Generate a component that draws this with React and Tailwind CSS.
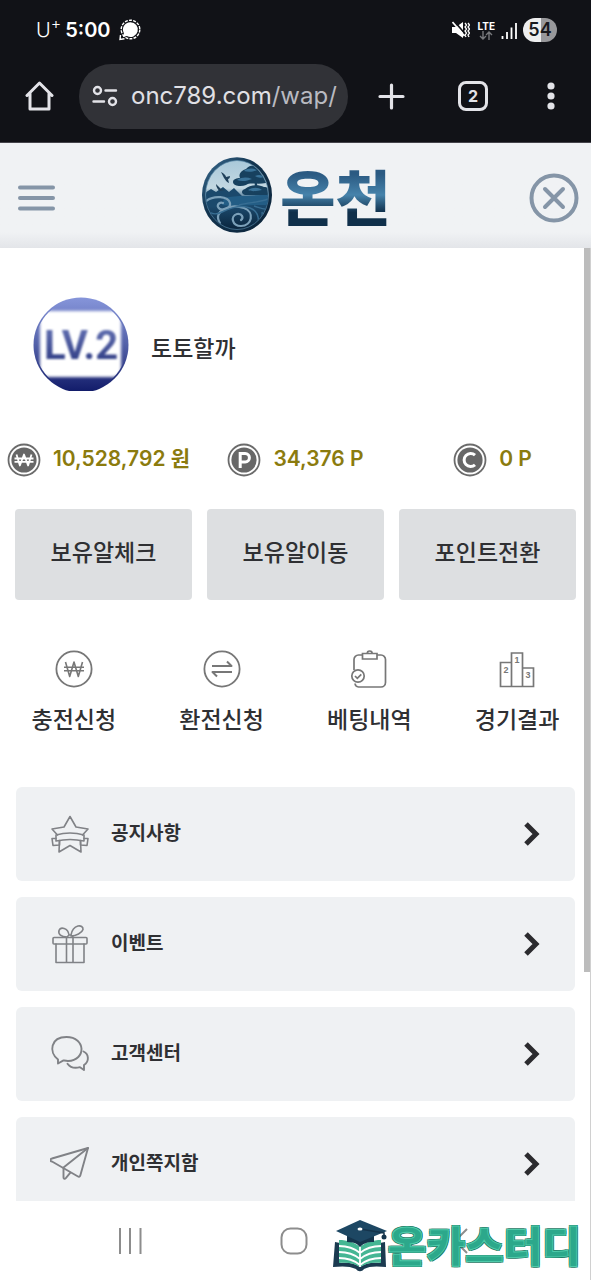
import React from "react";

const WonBadge = () => (
  <svg width="34" height="34" viewBox="0 0 34 34" aria-hidden="true">
    <circle cx="17" cy="17" r="15.5" fill="none" stroke="#6b6b6b" strokeWidth="1.8" />
    <circle cx="17" cy="17" r="12.6" fill="#676767" />
    <path d="M9.5 11.5l3.4 11 4.1-11 4.1 11 3.4-11M7.5 15.5h19M7.5 18.8h19" fill="none" stroke="#fff" strokeWidth="1.8" strokeLinejoin="round" />
  </svg>
);

const PointBadge = () => (
  <svg width="34" height="34" viewBox="0 0 34 34" aria-hidden="true">
    <circle cx="17" cy="17" r="15.5" fill="none" stroke="#6b6b6b" strokeWidth="1.8" />
    <circle cx="17" cy="17" r="12.6" fill="#676767" />
    <path d="M13.2 25V10.6h5a4.2 4.2 0 0 1 0 8.4h-5" fill="none" stroke="#fff" strokeWidth="3" />
  </svg>
);

const CouponBadge = () => (
  <svg width="34" height="34" viewBox="0 0 34 34" aria-hidden="true">
    <circle cx="17" cy="17" r="15.5" fill="none" stroke="#6b6b6b" strokeWidth="1.8" />
    <circle cx="17" cy="17" r="12.6" fill="#676767" />
    <path d="M22 12.2a6.5 6.5 0 1 0 0 9.6" fill="none" stroke="#fff" strokeWidth="3" />
  </svg>
);

const DepositIcon = () => (
  <svg width="38" height="38" viewBox="0 0 38 38" fill="none" stroke="#777" strokeWidth="1.8" aria-hidden="true">
    <circle cx="19" cy="19" r="17.6" />
    <path d="M10.5 12l4.2 14.500L19 12l4.300 14.500L27.500 12M9 17.300h20M9 20.800h20" strokeWidth="1.6" strokeLinejoin="round" />
  </svg>
);

const WithdrawIcon = () => (
  <svg width="38" height="38" viewBox="0 0 38 38" fill="none" stroke="#777" strokeWidth="1.8" aria-hidden="true">
    <circle cx="19" cy="19" r="17.6" />
    <path d="M9 16h19.5l-4.5-4.5M29 22H9.5l4.5 4.5" strokeWidth="2" strokeLinejoin="round" />
  </svg>
);

const BetIcon = () => (
  <svg width="38" height="40" viewBox="0 0 38 40" fill="none" stroke="#777" strokeWidth="1.7" aria-hidden="true">
    <path d="M12.5 6H8.5A4.5 4.5 0 0 0 4 10.5V21M5 34.5A4 4 0 0 0 8.5 38H31a4.5 4.5 0 0 0 4.5-4.5v-23A4.5 4.5 0 0 0 31 6h-4" />
    <path d="M12.5 4.5H27V10H12.5zM17.2 4.5a2.5 2.5 0 0 1 5 0" />
    <circle cx="8" cy="27" r="6.2" />
    <path d="M5 27l2.3 2.3 4-4" />
  </svg>
);

const ResultIcon = () => (
  <svg width="36" height="38" viewBox="0 0 36 38" aria-hidden="true">
    <path d="M1.5 12.5h11v24h-11zM12.5 3h11v33.5h-11zM23.5 18h11v18.5h-11z" fill="none" stroke="#777" strokeWidth="1.7" />
    <g fill="#777" fontFamily="Liberation Sans, sans-serif" fontSize="9" fontWeight="700" textAnchor="middle">
      <text x="7" y="23">2</text>
      <text x="18" y="13">1</text>
      <text x="29" y="28">3</text>
    </g>
  </svg>
);

const iconProps = {
  width: 40,
  height: 40,
  viewBox: "0 0 40 40",
  fill: "none",
  stroke: "#808286",
  strokeWidth: 1.6,
  strokeLinejoin: "round",
  strokeLinecap: "round",
  "aria-hidden": true,
};

const NoticeIcon = () => (
  <svg {...iconProps}>
    <path d="M7.5 21L2 15l12-2L20 2.500 26 13l12 2-5.500 6" />
    <path d="M6 21c9-2.500 19-2.500 28 0v6c-9-2-19-2-28 0z" />
    <path d="M6 24.500H2l1 7 6.500-.5v-4M34 24.500h4l-1 7-6.500-.5v-4" />
    <path d="M9.500 26.500L9 38l11-6.500L31 38l-.5-11.500" />
  </svg>
);

const EventIcon = () => (
  <svg {...iconProps}>
    <rect x="3" y="13.5" width="34" height="6.5" rx="1" />
    <path d="M6 20v18.500h28V20M16.500 13.500v25M23 13.500v25" />
    <path d="M17 13c-6 0-9-3-8-6.500C10.500 2.500 18 3.500 19 11M21 12c5 0 11-3 12-6.500C33.500 0 23 0 21 11M17 13l2-2h2l2 2" />
  </svg>
);

const SupportIcon = () => (
  <svg {...iconProps} strokeWidth="1.9">
    <path d="M8 25.500C-1.500 18 .5 3 16.500 3 36 3 36.500 26.500 18 27c-2 0-3-.3-4.500-.6L8 29.500z" />
    <path d="M33.500 17.500c5.500 2.500 6 10 .5 13.500v5l-4-2.800c-5 1.300-10 0-12.500-3.500" />
  </svg>
);

const MessageIcon = () => (
  <svg {...iconProps} strokeWidth="1.9">
    <path d="M38 4L2 14.500a1.500 1.500 0 0 0 0 3L28 32.500a1.600 1.600 0 0 0 2.300-1z" />
    <path d="M38 4L13.500 23.500v10c0 1.500 1.500 1.500 2.300.6l4.400-5.300" />
  </svg>
);

const balances = [
  { icon: WonBadge, text: "10,528,792 원" },
  { icon: PointBadge, text: "34,376 P" },
  { icon: CouponBadge, text: "0 P" },
];

const actions = ["보유알체크", "보유알이동", "포인트전환"];

const shortcuts = [
  { icon: DepositIcon, label: "충전신청" },
  { icon: WithdrawIcon, label: "환전신청" },
  { icon: BetIcon, label: "베팅내역" },
  { icon: ResultIcon, label: "경기결과" },
];

const menus = [
  { icon: NoticeIcon, label: "공지사항" },
  { icon: EventIcon, label: "이벤트" },
  { icon: SupportIcon, label: "고객센터" },
  { icon: MessageIcon, label: "개인쪽지함" },
];

const StatusBar = () => (
  <div className="flex h-15 items-center justify-between pl-9 pr-[34px] text-white">
    <div className="flex items-center">
      <span className="text-xl font-light">U<sup className="text-base">+</sup></span>
      <span className="ml-1 text-xl font-semibold">5:00</span>
      <svg className="ml-2" width="22" height="22" viewBox="0 0 22 22" aria-hidden="true">
        <circle cx="11.5" cy="10.5" r="9.3" fill="none" stroke="#fff" strokeWidth="1.4" strokeDasharray="3 1.2" />
        <path d="M11.5 3.2a7.4 7.4 0 1 1-3.6 13.900L4 18l.9-3.800A7.400 7.400 0 0 1 11.500 3.200z" fill="#fff" />
        <path d="M1.5 16L1 20.500l4.500-.8" fill="none" stroke="#fff" strokeWidth="1.4" />
      </svg>
    </div>

    <div className="flex items-center">
      <svg width="18" height="18" viewBox="0 0 18 18" aria-hidden="true">
        <path d="M0 6h4l7-5v16l-7-5H0z" fill="#fff" />
        <path d="M2 0l12 14" stroke="#111217" strokeWidth="1.8" />
        <path d="M.5 1l12 14" stroke="#fff" strokeWidth="1.7" />
        <path d="M13 2l1.500 2L13 6l1.500 2L13 10l1.500 2L13 14l1 2M16 2l1.500 2L16 6l1.500 2L16 10l1.500 2-1.500 2 1 2" fill="none" stroke="#fff" strokeWidth="1.3" />
      </svg>
      <div className="ml-2 flex flex-col items-center">
        <span className="text-[10px] font-bold leading-[10px]">LTE</span>
        <svg width="14" height="9" viewBox="0 0 14 9" fill="none" stroke="#77787c" strokeWidth="1.4" aria-hidden="true">
          <path d="M4 0v8M1 5l3 3 3-3M10 9V1M7 4l3-3 3 3" />
        </svg>
      </div>
      <svg className="ml-1.5" width="16" height="17" viewBox="0 0 16 17" stroke="#fff" strokeWidth="1.8" aria-hidden="true">
        <path d="M1.5 14v3M6 10v7M10.500 5.500V17M15 1v16" />
      </svg>
      <span className="ml-1.5 flex h-6 w-[34px] items-center justify-center rounded-full bg-linear-to-r from-[#eeeeef] from-53% to-[#98989b] to-53% text-lg font-semibold text-[#18191d]">
        54
      </span>
    </div>
  </div>
);

const BrowserBar = () => (
  <div className="flex h-18 items-center pl-[25px] pr-9">
    <button type="button" aria-label="Home">
      <svg width="29" height="32" viewBox="0 0 29 32" fill="none" stroke="#e3e3e8" strokeWidth="3" strokeLinejoin="round" strokeLinecap="round" aria-hidden="true">
        <path d="M2 15.5L14.500 3 27 15.500M5 13v16h19V13" />
      </svg>
    </button>
    <div className="ml-[25px] flex h-[65px] min-w-0 flex-1 items-center rounded-full bg-[#313237] pl-3 pr-2">
      <svg className="shrink-0" width="28" height="22" viewBox="0 0 28 22" fill="none" stroke="#e3e3e8" strokeWidth="2.4" strokeLinecap="round" aria-hidden="true">
        <circle cx="6.5" cy="5.5" r="3.5" />
        <path d="M14.5 5.5H25M2.500 16.500H13" />
        <circle cx="21.5" cy="16.5" r="3.5" />
      </svg>
      <span className="ml-3 min-w-0 flex-1 overflow-hidden whitespace-nowrap text-2xl text-[#e0e0e5]">
        onc789.com<span className="text-[#b9bac1]">/wap/</span>
      </span>
    </div>
    <button type="button" aria-label="New tab" className="ml-[30px]">
      <svg width="27" height="27" viewBox="0 0 27 27" stroke="#e3e3e8" strokeWidth="3.2" strokeLinecap="round" aria-hidden="true">
        <path d="M13.500 2v23M2 13.500h23" />
      </svg>
    </button>
    <button type="button" aria-label="Tabs" className="ml-[53px] flex size-[30px] items-center justify-center rounded-lg border-3 border-[#e3e3e8] text-base font-bold text-[#e3e3e8]">
      2
    </button>
    <button type="button" aria-label="More" className="ml-[59px]">
      <svg width="8" height="28" viewBox="0 0 8 28" fill="#e3e3e8" aria-hidden="true">
        <circle cx="4" cy="4" r="3.6" />
        <circle cx="4" cy="14" r="3.6" />
        <circle cx="4" cy="24" r="3.6" />
      </svg>
    </button>
  </div>
);

const Emblem = () => (
  <svg width="70" height="76" viewBox="0 0 70 76" aria-hidden="true">
    <defs>
      <linearGradient id="rim" x1="0" y1="0" x2="1" y2="1">
        <stop offset="0" stopColor="#3d6f94" />
        <stop offset=".4" stopColor="#12344f" />
        <stop offset="1" stopColor="#0b2237" />
      </linearGradient>
      <linearGradient id="sky" x1="0" y1="0" x2="0" y2="1">
        <stop offset="0" stopColor="#a9c8d9" />
        <stop offset=".4" stopColor="#c3d8e2" />
        <stop offset=".6" stopColor="#1f5075" />
        <stop offset="1" stopColor="#0a253d" />
      </linearGradient>
      <clipPath id="disc">
        <ellipse cx="35" cy="38" rx="31" ry="34" />
      </clipPath>
    </defs>
    <ellipse cx="35" cy="38" rx="35" ry="37.8" fill="url(#rim)" />
    <ellipse cx="35" cy="38" rx="31.5" ry="34.5" fill="url(#sky)" stroke="#5685a5" strokeWidth=".7" />
    <g clipPath="url(#disc)">
      <path d="M0 38l9-6 5 3 7-5 6 5 5-4 9 9h30v10H0z" fill="#1b496c" />
      <path d="M22 41c14-3 30-2 48-4v12c-16-3-34 2-50-1z" fill="#235d85" />
      <g fill="#17415f">
        <path d="M44 12c4-5 11-4 12-1 6-1 9 4 7 7 5 2 5 7 1 8-9 2-16-1-20 2-5 2-13 1-13-3 0-3 4-4 7-4-2-4 2-8 6-9z" />
        <path d="M43 32c4-4 13-5 19-2 6 0 8 6 3 8H43c-4-1-4-5 0-6z" />
        <path d="M57 20c-4 6-1 11 1 16l-5 1c0-7-1-11 1-17z" />
      </g>
      <g fill="#3a7399">
        <path d="M42 14c4-3 9-3 13-1-4 2-9 2-13 1zM35 23c5-3 10-3 15-1-5 2-10 3-15 1zM53 19c4-2 7-1 9 1-3 1-6 1-9-1zM46 33c5-3 10-3 14 0-5 1-10 2-14 0z" />
      </g>
      <path d="M19 15c4 2 5 4 5 5l4-1c0 2-1 3-2 3l1 4c-3-1-4-4-5-5-1-2-2-4-3-6zM14 27l5 5 4 1-5 1c-2-1-4-4-4-7z" fill="#20405a" />
      <g fill="none" stroke="#7ba0b9" strokeWidth="2.2" strokeLinecap="round">
        <path d="M4 44c8-6 22-5 24 2 1 6-9 9-12 4-1-3 2-5 5-4" />
        <path d="M18 66c-8-12 10-20 24-15 11 4 8 18-3 18-9 0-11-10-4-12 5-1 7 4 4 6" />
      </g>
      <g fill="none" stroke="#386e93" strokeWidth="1.4">
        <path d="M4 52c4 5 10 6 16 3 8-4 18-8 28-4 8 3 9 10 8 16M6 58c2 5 6 9 13 14M37 48c10-3 20-2 29-6M52 49c6 2 10 4 14 3M60 55c1 5-1 9-4 13" />
      </g>
    </g>
  </svg>
);

const SiteHeader = () => (
  <header className="flex h-[105px] shrink-0 items-center justify-between bg-[#eff1f4] bg-linear-to-b from-[#f0f2f4] from-85% to-[#e3e5e9] pl-[18px] pr-3 pt-1">
    <button type="button" aria-label="메뉴" className="w-[46px]">
      <svg width="37" height="26" viewBox="0 0 37 26" stroke="#8595a7" strokeWidth="4" strokeLinecap="round" aria-hidden="true">
        <path d="M2 2.500h33M2 13h33M2 23.500h33" />
      </svg>
    </button>
    <a href="#home" className="flex items-center gap-2 pb-1.5">
      <Emblem />
      <span className="bg-linear-to-b from-[#2b5a82] from-20% via-[#4683ab] via-50% to-[#10304b] to-75% bg-clip-text font-['Noto_Sans_CJK_KR',sans-serif] text-[60px] font-black leading-[70px] text-transparent">
        온천
      </span>
    </a>
    <button type="button" aria-label="닫기">
      <svg width="50" height="50" viewBox="0 0 50 50" fill="none" stroke="#8595a7" strokeWidth="4" strokeLinecap="round" aria-hidden="true">
        <circle cx="25" cy="25" r="22.5" />
        <path d="M16 16l18 18M34 16L16 34" />
      </svg>
    </button>
  </header>
);

const LevelBadge = () => (
  <svg width="96" height="96" viewBox="0 0 96 96" role="img" aria-label="LV.2">
    <defs>
      <linearGradient id="level" x1="0" y1="0" x2="0" y2="1">
        <stop offset="0" stopColor="#8695da" />
        <stop offset=".5" stopColor="#5260a8" />
        <stop offset="1" stopColor="#101a68" />
      </linearGradient>
      <linearGradient id="levelText" x1="0" y1="0" x2="0" y2="1">
        <stop offset="0" stopColor="#6a78b8" />
        <stop offset="1" stopColor="#26337d" />
      </linearGradient>
      <filter id="soft" x="-10%" y="-10%" width="120%" height="120%">
        <feGaussianBlur stdDeviation="1.6" />
      </filter>
      <filter id="softText" x="-10%" y="-10%" width="120%" height="120%">
        <feGaussianBlur stdDeviation=".9" />
      </filter>
      <clipPath id="round">
        <path d="M0 0h96v94H0z" />
      </clipPath>
      <clipPath id="inner">
        <circle cx="48" cy="48" r="46" />
      </clipPath>
    </defs>
    <circle cx="48" cy="48" r="47.5" fill="url(#level)" clipPath="url(#round)" />
    <g clipPath="url(#inner)">
      <rect x="7" y="14" width="81" height="66" rx="8" fill="#fff" filter="url(#soft)" />
    </g>
    <text x="48" y="62" textAnchor="middle" fill="url(#levelText)" filter="url(#softText)" fontFamily="Roboto, sans-serif" fontSize="40" fontWeight="700">
      LV.2
    </text>
  </svg>
);

const Watermark = () => (
  <div className="absolute bottom-2 right-[9px] flex items-center">
    <svg width="56" height="52" viewBox="0 0 56 52" aria-hidden="true">
      <path d="M3 22l5 1v20c8-1 15 0 20 4 5-4 12-5 20-4V23l5-1 1 25c-9-1-17-1-22 2-2 3-6 3-8 0-6-3-14-3-23-2z" fill="#1b3a50" />
      <path d="M7 20c8 0 15 2 21 7v20c-6-4-13-5-21-4zM49 20c-8 0-15 2-21 7v20c6-4 13-5 21-4z" fill="#45b693" />
      <path d="M7 26c8 0 15 2 21 7 6-5 13-7 21-7M7 32c8 0 15 2 21 7 6-5 13-7 21-7M7 38c8 0 15 2 21 7 6-5 13-7 21-7M28 27v20" fill="none" stroke="#fff" strokeWidth="1.8" />
      <path d="M15 14v8c9 0 11 3 13 5 3-3 6-5 14-5v-8z" fill="#15344c" />
      <path d="M28 0l27 11-27 11L4 11z" fill="#1d4763" />
      <path d="M28 9l24 4v6" fill="none" stroke="#15344c" strokeWidth="1.5" />
      <circle cx="52" cy="17" r="2.5" fill="#15344c" />
      <ellipse cx="28" cy="9" rx="2.5" ry="1.5" fill="#fff" />
    </svg>
    <span className="pb-1 font-['Noto_Sans_CJK_KR',sans-serif] text-[42px] font-black leading-[48px] text-[#2ca88b] [-webkit-text-stroke:1px_#4fcbaa] [text-shadow:1px_1px_0_#1b7762,-1px_-1px_0_#1b7762,1px_-1px_0_#1b7762,-1px_1px_0_#1b7762]">
      온카스터디
    </span>
  </div>
);

const SystemNav = () => (
  <nav className="relative flex h-[79px] shrink-0 items-center justify-between border-r border-[#d0d0d0] bg-white pl-[117px] pr-[105px]">
    <button type="button" aria-label="Recents">
      <svg width="26" height="26" viewBox="0 0 26 26" stroke="#8d8d8d" strokeWidth="2" aria-hidden="true">
        <path d="M3 0v26M13 0v26M23.500 0v26" />
      </svg>
    </button>
    <button type="button" aria-label="Home">
      <svg width="28" height="28" viewBox="0 0 28 28" fill="none" stroke="#8d8d8d" strokeWidth="2" aria-hidden="true">
        <rect x="1.5" y="1.5" width="25" height="25" rx="9" />
      </svg>
    </button>
    <button type="button" aria-label="Back" className="w-10 pl-2">
      <svg width="16" height="26" viewBox="0 0 16 26" fill="none" stroke="#8d8d8d" strokeWidth="2" aria-hidden="true">
        <path d="M14 1L2 13l12 12" />
      </svg>
    </button>
    <Watermark />
  </nav>
);

const App = () => {
  return (
    <div className="flex h-screen flex-col overflow-hidden bg-white font-['Inter','Noto_Sans_CJK_KR',sans-serif] text-[#2f3033]">
      {/* Phone status + browser toolbar */}
      <div className="shrink-0 border-b border-[#45444b] bg-[#111217] pb-2.5">
        <StatusBar />
        <BrowserBar />
      </div>

      <SiteHeader />

      <main className="relative min-h-0 flex-1 overflow-hidden">
        {/* Profile */}
        <div className="flex items-center gap-[22px] pl-[33px] pt-[49px]">
          <LevelBadge />
          <span className="pt-2 text-[23px] font-medium">토토할까</span>
        </div>

        {/* Balances */}
        <div className="mt-[50px] grid grid-cols-3">
          {balances.map(({ icon: Icon, text }) => (
            <div key={text} className="flex h-[34px] items-center justify-center gap-3 whitespace-nowrap">
              <Icon />
              <span className="pb-0.5 text-[21px] font-semibold text-[#8b7b0e]">{text}</span>
            </div>
          ))}
        </div>

        {/* Actions */}
        <div className="mt-8 grid grid-cols-3 gap-[15px] px-[15px]">
          {actions.map((label) => (
            <button key={label} type="button" className="h-[91px] rounded bg-[#dddfe1] pb-0.5 text-[23px] font-medium">
              {label}
            </button>
          ))}
        </div>

        {/* Shortcuts */}
        <div className="mt-[50px] grid grid-cols-4">
          {shortcuts.map(({ icon: Icon, label }) => (
            <a key={label} href="#shortcut" className="flex flex-col items-center text-[23px] font-medium leading-8">
              <span className="flex h-[38px] items-center">
                <Icon />
              </span>
              <span className="mt-4">{label}</span>
            </a>
          ))}
        </div>

        {/* Menu list */}
        <ul className="mt-[51px] flex flex-col gap-4 px-4">
          {menus.map(({ icon: Icon, label }) => (
            <li key={label}>
              <a href="#menu" className="flex h-[94px] items-center rounded-md bg-[#eff1f3] pl-[34px] pr-[34px]">
                <Icon />
                <span className="ml-[21px] flex-1 text-[19px] font-bold">{label}</span>
                <svg width="18" height="26" viewBox="0 0 18 26" fill="none" stroke="#2b2b2e" strokeWidth="5" aria-hidden="true">
                  <path d="M3 3l10 10L3 23" />
                </svg>
              </a>
            </li>
          ))}
        </ul>

        {/* Scroll track and thumb */}
        <div className="absolute inset-y-0 right-0 w-[7px] border-r border-[#d0d0d0]">
          <div className="h-[76%] bg-[#bcbcbc]" />
        </div>
      </main>

      <SystemNav />
    </div>
  );
};

export default App;
